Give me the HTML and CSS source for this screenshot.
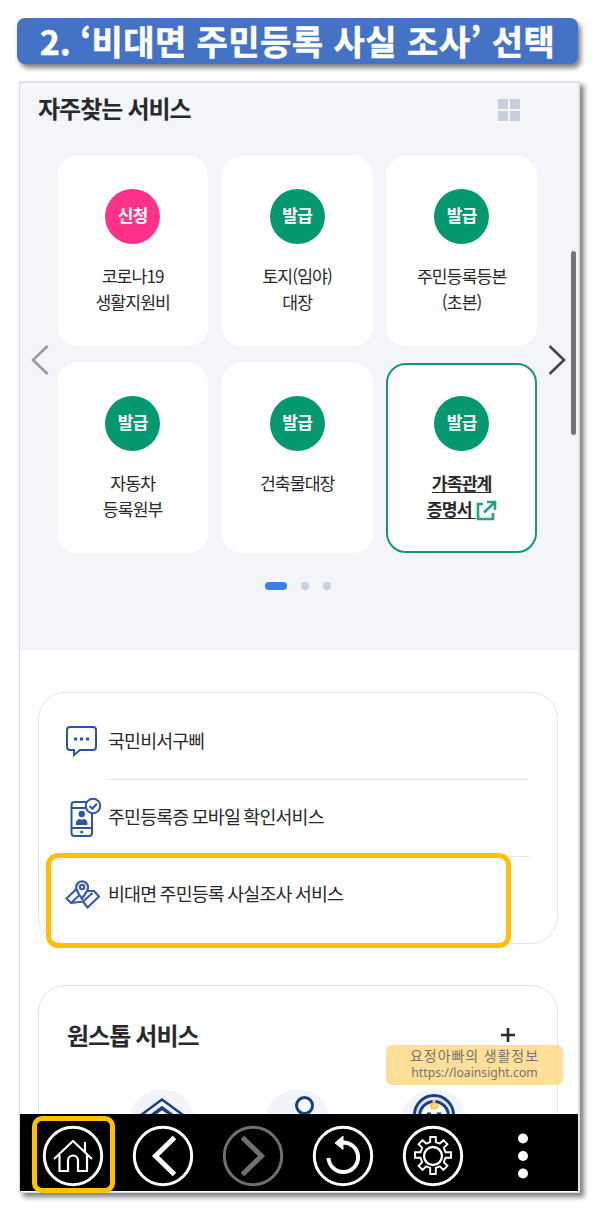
FILE: index.html
```html
<!DOCTYPE html>
<html lang="ko">
<head>
<meta charset="utf-8">
<title>비대면 주민등록 사실 조사</title>
<link rel="stylesheet" href="styles.css">
</head>
<body>
<h1 class="banner"><span class="step">2. ‘</span>비대면 주민등록 사실 조사’ 선택</h1>
<main class="phone">
  <section class="favorites">
    <header class="fav-head">
      <h2 class="heading">자주찾는 서비스</h2>
      <div class="grid-icon"><i></i><i></i><i></i><i></i></div>
    </header>
    <div class="carousel">
      <svg class="arrow" width="20" height="32" viewBox="0 0 20 32"><path d="M17.500 2 3 16l14.500 14" fill="none" stroke="#9b9b9d" stroke-width="2.600"/></svg>
      <div class="cards">
        <article class="card"><span class="badge pink">신청</span><p class="label">코로나19<br>생활지원비</p></article>
        <article class="card"><span class="badge">발급</span><p class="label">토지(임야)<br>대장</p></article>
        <article class="card"><span class="badge">발급</span><p class="label">주민등록등본<br>(초본)</p></article>
        <article class="card"><span class="badge">발급</span><p class="label">자동차<br>등록원부</p></article>
        <article class="card"><span class="badge">발급</span><p class="label">건축물대장</p></article>
        <article class="card active"><span class="badge">발급</span><p class="label"><u>가족관계</u><br><u>증명서 </u><svg class="ext" width="21" height="21" viewBox="0 0 21 21"><path d="M7 4H2v15h15v-6M8 12.500 18 3M11 2h8v8" fill="none" stroke="#27a27b" stroke-width="2.600"/></svg></p></article>
      </div>
      <svg class="arrow" width="20" height="32" viewBox="0 0 20 32"><path d="M2.500 2 17 16 2.500 30" fill="none" stroke="#454545" stroke-width="2.600"/></svg>
    </div>
    <div class="dots"><i class="on"></i><i></i><i></i></div>
  </section>

  <section class="box services">
    <div class="row">
      <svg class="row-icon" width="36" height="40" viewBox="0 0 36 40" fill="none" stroke="#2f54a5" stroke-width="2"><path d="M5 6h23q3 0 3 3v17q0 3-3 3H15l-6 5v-5H5q-3 0-3-3V9q0-3 3-3z"/><path d="M9 18h3.200M15 18h3.200M21 18h3.200" stroke-width="3.200"/></svg>
      <span class="row-text">국민비서구삐</span>
    </div>
    <div class="row">
      <svg class="row-icon" width="36" height="40" viewBox="0 0 36 40" fill="none" stroke="#2f54a5" stroke-width="2"><rect x="6.500" y="5" width="20.500" height="34" rx="3"/><path d="M6.500 11H27M6.500 31H27"/><circle cx="16.700" cy="17" r="3.200" fill="#2f54a5" stroke="none"/><path d="M11 28v-1.500q0-4.500 4-4.500l1.700 1 1.700-1q4 0 4 4.500V28z" fill="#2f54a5" stroke="none"/><circle cx="16.700" cy="35" r="1.600" fill="#2f54a5" stroke="none"/><circle cx="28" cy="9" r="7.200" fill="#fff"/><path d="m24.500 9 2.800 2.800 4.700-5"/></svg>
      <span class="row-text">주민등록증 모바일 확인서비스</span>
    </div>
    <div class="row">
      <svg class="row-icon" width="36" height="40" viewBox="0 0 36 40" fill="none" stroke="#3c5ba8" stroke-width="2.200" stroke-linejoin="round"><path d="M12 14.500 1.500 24.500 6 29l12-1.500 4.500 6L34 22.500 29 17h-6M6.500 28.500 14 21.500M18 27.500 27.500 19"/><path d="M17 25c-1.500-4-5.800-6.500-5.800-11.700a5.900 5.900 0 0 1 11.800 0C23 18.500 18.500 21 17 25z" fill="#fff"/><circle cx="17.100" cy="13" r="2.200"/></svg>
      <span class="row-text">비대면 주민등록 사실조사 서비스</span>
    </div>
  </section>

  <section class="box onestop">
    <header class="one-head">
      <h2 class="heading">원스톱 서비스</h2>
      <svg width="14" height="14" viewBox="0 0 14 14"><path d="M7 0v14M0 7h14" stroke="#2c2c30" stroke-width="2.600"/></svg>
    </header>
    <div class="round-row">
      <svg width="66" height="66" viewBox="0 0 66 66" fill="none" stroke="#1c3f84"><circle cx="33" cy="33" r="33" fill="#f2f4f9" stroke="none"/><path d="M10 27.500 33 10.500l23 17" stroke-width="2.500"/><path d="M18 30 33 19l15 11" stroke-width="3.500"/></svg>
      <svg width="66" height="66" viewBox="0 0 66 66" fill="none" stroke="#1c3f84"><circle cx="33" cy="33" r="33" fill="#f2f4f9" stroke="none"/><circle cx="39.500" cy="16.500" r="8" fill="#fff" stroke-width="3"/></svg>
      <svg width="66" height="66" viewBox="0 0 66 66" fill="none" stroke="#1c3f84"><circle cx="33" cy="33" r="33" fill="#f2f4f9" stroke="none"/><circle cx="33" cy="26" r="19.500" stroke-width="3" fill="#dce5f3"/><circle cx="33" cy="27" r="14.500" stroke-width="3" fill="#fff"/><path d="M33 11v5M30 15q0 4 3 4 3.500 0 3.500-3.500" stroke="#f8c94f" stroke-width="3"/><path d="M26 24.500h4M36 24.500h4" stroke-width="2"/></svg>
    </div>
  </section>

  <nav class="nav">
    <svg viewBox="0 0 62 62"><circle cx="31" cy="31" r="28.700"/><path d="M12 34 31 16l19 18M17.500 30v16H26V35.500a5 5 0 0 1 10 0V46h9V30M43 27V17" stroke-width="2.200"/></svg>
    <svg viewBox="0 0 62 62"><circle cx="31" cy="31" r="28.700"/><path d="M42.500 12.500 23.500 31l19 18.500" stroke-width="5"/></svg>
    <svg class="dim" viewBox="0 0 62 62"><circle cx="31" cy="31" r="28.700"/><path d="M20.500 12.500 39.500 31l-19 18.500" stroke-width="5"/></svg>
    <svg viewBox="0 0 62 62"><circle cx="31" cy="31" r="28.700"/><path d="M16.500 33A14.800 14.800 0 1 0 30 17.500" stroke-width="4"/><path d="M31 11v13.500L23 18z" fill="#fff" stroke-width="1"/></svg>
    <svg viewBox="0 0 62 62"><circle cx="31" cy="31" r="28.700"/><circle cx="31" cy="31" r="9" stroke-width="2.300"/><path stroke-width="1.900" d="M28.200 12h5.600v5l4 1.700 3.600-3.500 4 4-3.600 3.600 1.700 4.400h5.500v5.600h-5.500l-1.700 4.400 3.600 3.600-4 4-3.600-3.500-4 1.700v6h-5.600v-6l-4-1.700-3.600 3.500-4-4 3.600-3.600-1.700-4.400h-5.500v-5.600h5.500l1.700-4.400-3.600-3.600 4-4 3.600 3.500 4-1.700z"/></svg>
    <svg viewBox="0 0 62 62"><g fill="#fff" stroke="none"><circle cx="31" cy="13.500" r="5"/><circle cx="31" cy="31" r="5"/><circle cx="31" cy="48.500" r="5"/></g></svg>
  </nav>
  <div class="scrollbar"></div>
  <div class="mark mark-service"></div>
  <div class="mark mark-home"></div>
  <aside class="watermark"><span class="wm-name">요정아빠의 생활정보</span><span class="wm-url">https://loainsight.com</span></aside>
</main>
</body>
</html>
```
FILE: styles.css
```css
* { box-sizing: border-box; }

body {
  margin: 0;
  padding: 18px 0 0 17px;
  height: 1210px;
  overflow: hidden;
  background: #fff;
  color: #29292b;
  font-family: "Noto Sans CJK KR", "Noto Sans", sans-serif;
}

h1, h2, p { margin: 0; }
svg { display: block; flex: none; }

.banner {
  width: 561px;
  height: 46px;
  border-radius: 8px;
  background: #4472c4;
  box-shadow: 3px 4px 5px rgba(0, 0, 0, .5);
  color: #fff;
  font-size: 34px;
  font-weight: 700;
  line-height: 45px;
  letter-spacing: .45px;
  text-align: center;
  white-space: nowrap;
  -webkit-text-stroke: .5px #fff;
}
.step { letter-spacing: 0; }

.phone {
  position: relative;
  display: flex;
  flex-direction: column;
  width: 561px;
  height: 1112px;
  margin: 17px 0 0 2px;
  border: 1px solid #dcdcdc;
  border-top: 2px solid #e2e2e2;
  border-right: 2px solid #e2e2e2;
  background: #fff;
  box-shadow: 4px 4px 5px rgba(0, 0, 0, .5);
}

.heading {
  font-size: 24px;
  font-weight: 700;
  line-height: 34px;
  letter-spacing: -1px;
  word-spacing: -.6px;
  white-space: nowrap;
}

.favorites {
  flex: none;
  height: 568px;
  padding-top: 8px;
  background: #f3f5f9;
}

.fav-head {
  display: flex;
  justify-content: space-between;
  padding: 0 58px 0 18px;
}

.grid-icon {
  display: grid;
  grid-template-columns: 10px 10px;
  grid-auto-rows: 10px;
  gap: 2px;
  margin-top: 8px;
}
.grid-icon i { background: #c7cfdf; }

.carousel {
  display: flex;
  align-items: center;
  margin-top: 31px;
  padding-left: 10px;
}
.arrow { margin-top: 10px; }

.cards {
  display: grid;
  grid-template-columns: repeat(3, 151px);
  grid-auto-rows: 190px;
  gap: 17px 13.500px;
  margin: 0 9.400px 0 7.200px;
}

.card {
  display: flex;
  flex-direction: column;
  align-items: center;
  padding-top: 33px;
  border-radius: 20px;
  background: #fff;
}

.badge {
  width: 55px;
  height: 55px;
  border-radius: 50%;
  background: #039870;
  color: #fff;
  font-size: 17px;
  font-weight: 700;
  line-height: 52px;
  letter-spacing: -.8px;
  text-align: center;
}
.pink { background: #ff3188; }

.label {
  margin-top: 18.500px;
  font-size: 17.200px;
  line-height: 26px;
  letter-spacing: -.9px;
  text-align: center;
  white-space: nowrap;
}

.active {
  padding-top: 30.500px;
  border: 2.500px solid #16986f;
}
.active .label { margin-top: 19px; font-weight: 700; }
.active u { text-underline-offset: 2px; text-decoration-thickness: 1px; }
.ext { display: inline-block; margin-left: 0; vertical-align: -5px; }

.dots {
  display: flex;
  justify-content: center;
  gap: 14px;
  margin: 29px 0 0 -2px;
}
.dots i { width: 8px; height: 8px; border-radius: 4px; background: #c7d0e0; }
.dots .on { width: 22px; background: #3d7fe5; }

.box {
  flex: none;
  width: 520px;
  margin-left: 18px;
  border: 1.500px solid #e4e5eb;
  border-radius: 27px;
}

.services {
  height: 252px;
  margin-top: 41px;
  padding: 11px 28px 0 26px;
}
.row {
  display: flex;
  align-items: center;
  height: 76.300px;
}
.row-icon { margin: -2px 7px 0 0; }
.row-text {
  flex: 1;
  height: 100%;
  border-bottom: 1.500px solid #e2e3eb;
  font-size: 18.400px;
  line-height: 73px;
  letter-spacing: -.85px;
  word-spacing: -.9px;
  white-space: nowrap;
}
.row:last-child .row-text { border: 0; }

.onestop {
  height: 129px;
  margin-top: 41px;
  border-bottom: 0;
  border-radius: 27px 27px 0 0;
  overflow: hidden;
}
.one-head {
  display: flex;
  align-items: center;
  justify-content: space-between;
  padding: 32px 42px 0 28px;
}
.round-row {
  display: flex;
  gap: 70px;
  margin: 37px 0 0 90px;
}

.nav {
  display: flex;
  flex: none;
  align-items: center;
  gap: 28px;
  height: 77px;
  padding: 7px 0 0 22px;
  background: #000;
}
.nav svg { width: 62px; height: 62px; fill: none; stroke: #fff; stroke-width: 3; }
.nav .dim { stroke: #707070; }

.scrollbar {
  position: absolute;
  top: 168px;
  left: 551px;
  width: 5px;
  height: 184px;
  border-radius: 3px;
  background: #747476;
}

.mark { position: absolute; border: 5px solid #ffc000; border-radius: 12px; }
.mark-service { top: 770px; left: 26px; width: 464.500px; height: 94.500px; }
.mark-home { top: 1033px; left: 12px; width: 82.500px; height: 77px; border-radius: 10px; }

.watermark {
  position: absolute;
  top: 962px;
  left: 366px;
  display: flex;
  flex-direction: column;
  align-items: center;
  width: 177px;
  height: 40px;
  border-radius: 6px;
  background: rgba(255, 217, 135, .85);
  color: #77736c;
  white-space: nowrap;
}
.wm-name { font-size: 14px; line-height: 21px; letter-spacing: .9px; }
.wm-url { font-family: "Noto Sans", sans-serif; font-size: 12.200px; line-height: 13px; }
```
